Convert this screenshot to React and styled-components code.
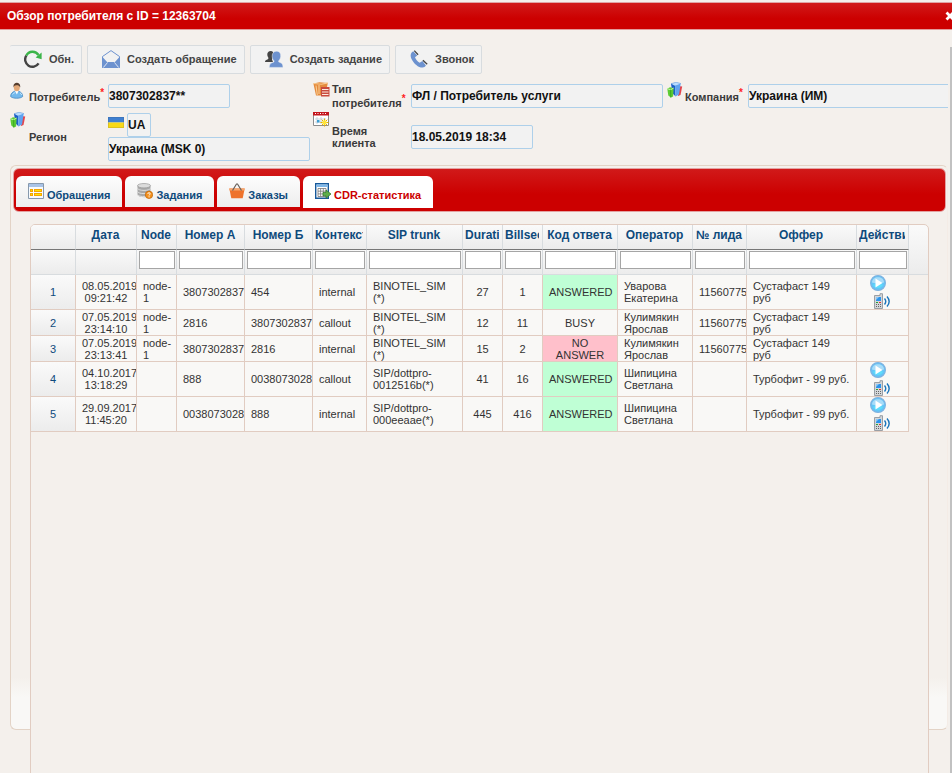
import React from "react";
import styled, { createGlobalStyle, css } from "styled-components";

const Global = createGlobalStyle`
  * { box-sizing: border-box; }
  body { margin: 0; background: #f4f0ec; font-family: "Liberation Sans", Arial, sans-serif; color: #222; overflow: hidden; }
  button, input { font-family: inherit; }
`;

const Dialog = styled.div`
  display: flex;
  flex-direction: column;
  height: 100vh;
  overflow: hidden;
`;
const TitleBar = styled.header`
  display: flex;
  align-items: center;
  justify-content: space-between;
  flex: none;
  height: 28px;
  margin-top: 2px;
  padding-left: 7px;
  overflow: hidden;
  border-top: 1px solid #e0a5a5;
  border-bottom: 1px solid #e39b9b;
  background: linear-gradient(#d11a1a, #c00 60%);
`;
const Title = styled.h1`
  margin: 0;
  font-size: 12px;
  line-height: 16px;
  color: #fff;
`;
const CloseButton = styled.button`
  display: flex;
  flex: none;
  width: 7px;
  height: 16px;
  padding: 0;
  border: 0;
  align-items: center;
  overflow: hidden;
  background: none;
  cursor: pointer;
  svg { flex: none; }
`;
const Body = styled.div`
  display: flex;
  flex: 1;
  min-height: 0;
`;
const Content = styled.main`
  display: flex;
  flex: 1;
  min-width: 0;
  flex-direction: column;
  padding: 15px 2px 43px 10px;
`;
const ScrollThumb = styled.div`
  flex: none;
  width: 2px;
  margin-top: 17px;
  background: #c1c1c1;
`;

const Toolbar = styled.div`
  display: flex;
  flex: none;
  gap: 5px;
  height: 29px;
`;
const ToolButton = styled.button`
  display: flex;
  align-items: center;
  gap: 7px;
  padding: 0 7px 2px 14px;
  border: 1px solid #d8dcdf;
  border-radius: 2px;
  background: #f2f2f2;
  color: #444;
  font-size: 11px;
  font-weight: bold;
  white-space: nowrap;
  cursor: pointer;
  &:first-child { border-left: 0; }
  svg { flex: none; }
`;

const Form = styled.form`
  display: grid;
  flex: none;
  grid-template-columns: 19px 79px 205px 19px 79px 256px 18px 63px minmax(0, 1fr);
  grid-template-rows: 30px 52px;
  align-items: center;
  margin-top: 7px;
  overflow: hidden;
`;
const FieldIcon = styled.span`
  display: flex;
  align-self: start;
  padding-top: 1px;
`;
const Label = styled.label`
  font-size: 11px;
  line-height: 12px;
  font-weight: bold;
  color: #3a3a3a;
  sup { font-size: 10px; line-height: 8px; color: #f22; }
`;
const TextField = styled.input`
  width: ${(p) => p.$width};
  height: 24px;
  padding: 0;
  border: 1px solid #aed0ea;
  border-radius: 2px;
  background: #f2f2f2;
  color: #111;
  font-size: 12px;
  font-weight: bold;
`;
const Region = styled.div`
  display: flex;
  flex-direction: column;
`;
const Country = styled.div`
  display: flex;
  align-items: flex-start;
  gap: 3px;
`;
const FlagBox = styled.span`
  display: flex;
  padding-top: 4px;
`;

const Panel = styled.section`
  display: flex;
  flex: 1;
  min-height: 0;
  flex-direction: column;
  margin-top: 2px;
  padding: 2px 1px 2px 2px;
  border: 1px solid #e3d3c6;
  border-right-color: #f4ece6;
  border-radius: 6px;
  background: linear-gradient(#f4f0ec calc(100% - 52px), #f9f8f6 calc(100% - 32px));
`;
const TabBar = styled.nav`
  display: flex;
  flex: none;
  gap: 3px;
  height: 44px;
  padding: 7px 2px 0;
  border: 1px solid #e3a1a1;
  border-radius: 6px;
  background: linear-gradient(#d11a1a, #c00 60%);
`;
const Tab = styled.button`
  display: flex;
  align-items: center;
  gap: 3px;
  height: 31px;
  padding: 0 12px 2px;
  border: 0;
  border-radius: 6px 6px 0 0;
  background: linear-gradient(#fdfdfd, #ededed);
  color: #0e4a7c;
  font-size: 11px;
  font-weight: bold;
  white-space: nowrap;
  cursor: pointer;
  span { padding-top: 8px; }
  svg { flex: none; }
  ${(p) => p.$active && css`height: 32px; background: #fff; color: #c00;`}
`;

const GridBox = styled.div`
  flex: none;
  height: 600px;
  margin: 12px 17px 0;
  overflow: hidden;
  border: 1px solid #e1ccc1;
  border-radius: 5px 5px 0 0;
  background: linear-gradient(#fafafa, #ececec 49px, #d8dcdf 49px, #d8dcdf 50px, #f4f0ec 50px);
`;
const Table = styled.table`
  width: 878px;
  table-layout: fixed;
  border-collapse: separate;
  border-spacing: 0;
  font-size: 11px;
  line-height: 12px;
`;
const Column = styled.col`
  width: ${(p) => p.$width}px;
`;
const HeadCell = styled.th`
  height: 25px;
  padding: 0 3px 5px 2px;
  border-right: 1px solid #d8dcdf;
  border-bottom: 1px solid #777;
  background: linear-gradient(#fafafa, #ececec);
  color: #0e4a7c;
  font-size: 12px;
  text-align: center;
`;
const HeadText = styled.div`
  overflow: hidden;
  line-height: 14px;
  white-space: nowrap;
`;
const FilterCell = styled.td`
  height: 25px;
  padding: 0 1px 5px 2px;
  border-right: 1px solid #d8dcdf;
  border-bottom: 1px solid #d8dcdf;
  background: linear-gradient(#f9f9f9, #ececec);
`;
const FilterInput = styled.input`
  display: block;
  width: 100%;
  height: 18px;
  padding: 1px;
  border: 1px solid #a5a5a5;
  background: #fff;
`;
const statusColor = { ANSWERED: "#bfffd5", "NO ANSWER": "#ffc0cb" };
const Cell = styled.td`
  height: ${(p) => (p.$tall ? 35 : 26)}px;
  padding: 0 6px;
  overflow: hidden;
  border-right: 1px solid #e1ccc1;
  border-bottom: 1px solid #e1ccc1;
  background: ${(p) => statusColor[p.$status] || "#f9f8f6"};
  color: #333;
  text-align: ${(p) => (p.$center ? "center" : "left")};
`;
const NumberCell = styled(Cell)`
  background: linear-gradient(#fafafa, #ececec);
  color: #0e4a7c;
  text-align: center;
`;
const ActionCell = styled(Cell)`
  padding: 0 0 0 13px;
`;
const Actions = styled.div`
  display: flex;
  flex-direction: column;
  align-items: flex-start;
  gap: 2px;
`;
const IconButton = styled.button`
  display: flex;
  padding: 0;
  border: 0;
  background: none;
  cursor: pointer;
`;

const RefreshIcon = () => (
  <svg width="18" height="18" viewBox="0 0 18 18" fill="none">
    <path d="M2.300 5.600A7 7 0 0 1 14.500 5" stroke="#3bb54a" strokeWidth="2.400" />
    <path d="M2.300 5.600A7 7 0 0 0 14.600 13.400" stroke="#444" strokeWidth="2.400" />
    <path d="M17.600 2.600v6.600l-6-1.800z" fill="#3bb54a" />
  </svg>
);
const EnvelopeIcon = () => (
  <svg width="18" height="18" viewBox="0 0 18 18">
    <path d="M.5 6.500 9 .6l8.500 5.900V17.500H.5z" fill="#f2f2f2" stroke="#6d92cf" />
    <path d="m.5 7 5 5.500-5 5zM17.500 7l-5 5.500 5 5z" fill="#6d92cf" />
    <path d="M5.500 12h7L18 18H0z" fill="#6d92cf" />
    <path d="m5.500 12.500-4 5M12.500 12.500l4 5" fill="none" stroke="#eef3fa" strokeWidth=".8" />
  </svg>
);
const PeopleIcon = () => (
  <svg width="18" height="18" viewBox="0 0 18 18">
    <path d="M5.500 1C8 1 9 3 8.500 5.500L7 9.500l1 2.500H0c0-1.800 1-2 3.300-3V7.500C1.500 5 2.200 1 5.500 1z" fill="#444" />
    <path d="M11.500 1.200c3 0 4.600 2.200 4.200 5.300-.2 2-1 3.400-2 4.300v1.200c2.600 1 4.300 1.500 4.300 5.400H4.300c0-3.900 2-4.400 4.700-5.400v-1.200C6.200 8.200 6.300 1.200 11.500 1.200z" fill="#6d92cf" stroke="#f2f2f2" strokeWidth=".5" />
  </svg>
);
const PhoneIcon = () => (
  <svg width="18" height="18" viewBox="0 0 18 18">
    <path d="M3.200 1.200C.3 2.800 0 6 1.800 9.400c2.200 4.200 6.500 8.200 10.800 8.100 1.400 0 2.600-.7 3.300-2L12.400 11l-2.700 1.700C7.500 11.500 6 9.500 5 7.200l2.200-1.700z" fill="#6d92cf" />
    <path d="m4.300.6 3.800 4.100M12.900 10.200l4.300 4" stroke="#444" strokeWidth="1.300" />
  </svg>
);
const UserIcon = () => (
  <svg width="14" height="17" viewBox="0 0 14 17">
    <path d="M.6 14.500C.7 11 3 10 4.300 9.200h4.500c2 .9 3.800 2 3.900 5.300-2 2.300-10 2.400-12.100 0z" fill="#72b8ec" stroke="#3d83bd" strokeWidth=".7" />
    <path d="M2.500 12.500c1-1.500 2-1.500 2.500-2M10 11c1 .5 1.500 1.200 1.700 2" stroke="#c5e6fb" fill="none" />
    <path d="M4.700 8.500h4l-1.800 4z" fill="#fff" />
    <ellipse cx="6.800" cy="5.200" rx="3" ry="4" fill="#e2a878" />
    <path d="M3.500 5.300C2.500-.6 11-.8 10.200 5.300 9.300 3.500 8 3 6.500 3.200 5 3 4 3.700 3.500 5.300z" fill="#543d2e" />
  </svg>
);
const CubesIcon = () => (
  <svg width="16" height="16" viewBox="0 0 16 16">
    <path d="m11 4 4.200.5-1.700 8.500-2.500 1z" fill="#e3434b" />
    <path d="m4 1.800 5-1.600 4.700 1.300-2 1.800-4.700.5z" fill="#b9dcff" stroke="#4b8ad8" strokeWidth=".5" />
    <path d="m4 1.800 4 2.200.6 10.500-3-3z" fill="#1b5fc7" />
    <path d="m8 4 5.700-2.500-1.700 11L8.600 14.500z" fill="#5fa3f0" />
    <path d="M.3 6.700 3 5.300l3.600.8-.5 8.500-2.300 1-2.500-2.200z" fill="#5ccb34" />
    <path d="m.3 6.700 3.300 1 3-1.600" fill="none" stroke="#c8f6a9" />
    <path d="m3.600 7.700.2 7.900" stroke="#2e981b" strokeWidth=".7" />
  </svg>
);
const TypeIcon = () => (
  <svg width="17" height="15" viewBox="0 0 17 15">
    <path d="m.4 1.500 6-1.200 8.400.6-.8 4H8v8.500H3z" fill="#e48a3c" />
    <path d="m.4 1.500 8 .8 6.400-1.400M3 3.500 4.300 13M6 3v9" fill="none" stroke="#f9cd93" strokeWidth="1.100" />
    <rect x="8" y="5" width="8.500" height="9.500" fill="#c94a3d" />
    <path d="M9 7.500h6.500M9 10h6.500M9 12.500h6.500" stroke="#fbe9e0" />
  </svg>
);
const CalendarIcon = () => (
  <svg width="16" height="15" viewBox="0 0 16 15">
    <path d="M.5.5h15v13H.5z" fill="#fff" stroke="#8c8c8c" />
    <path d="M0 0h16v3.500H0z" fill="#c4161c" />
    <path d="M2 1.500h12" stroke="#fff" strokeDasharray="1 1.500" />
    <path d="M4 5v7M8 5v7M2 7h11M2 10h9" stroke="#bdc9d4" strokeWidth=".8" />
    <path d="M4 8h2.500v2.500H4z" fill="#3a9fd4" />
    <path d="M11.500 6.500v8M7.500 10.500h8M8.700 7.700l5.600 5.600M14.300 7.700l-5.600 5.600" stroke="#e5ad00" />
    <circle cx="11.500" cy="10.500" r="2.200" fill="#ffe536" />
  </svg>
);
const FlagIcon = () => (
  <svg width="16" height="11" viewBox="0 0 16 11">
    <path d="M0 0h16v5.500H0z" fill="#3f7fd0" />
    <path d="M0 5.500h16V11H0z" fill="#f8d917" />
    <path d="M.5.500h15v10H.5z" fill="none" stroke="#345" strokeOpacity=".15" />
  </svg>
);
const ListIcon = () => (
  <svg width="16" height="16" viewBox="0 0 16 16">
    <path d="M.5.500h15v15H.5z" fill="#f7fafd" stroke="#8799ad" />
    <path d="M1 1h14v3H1z" fill="#a9c3e6" />
    <path d="M2 6h3v3H2zM2 10h3v3H2zM6 6h8v3H6zM6 10h8v3H6z" fill="#f5a400" />
    <path d="M3 7h1v1H3zM3 11h1v1H3zM7 7h6v1H7zM7 11h6v1H7z" fill="#ffe600" />
  </svg>
);
const DatabaseIcon = () => (
  <svg width="16" height="16" viewBox="0 0 16 16">
    <path d="M.5 2.500v9c0 3.500 13 3.500 13 0v-9z" fill="#a8a8a8" />
    <path d="M.5 5.300c1 2.800 12 2.800 13 0M.5 8.500c1 2.800 12 2.800 13 0M.5 11.500c1 2.500 9 2.500 10 1.500" stroke="#ddd" fill="none" />
    <ellipse cx="7" cy="2.700" rx="6.500" ry="2.200" fill="#dcdcdc" stroke="#999" strokeWidth=".7" />
    <circle cx="12" cy="11.800" r="3.700" fill="#f4911e" stroke="#bb6206" strokeWidth=".7" />
    <path d="M10.800 10.800c.1-1.500 2.600-1.300 2.400.1 0 .7-1.100.8-1.100 1.600M12.100 13.300v1" stroke="#fff" fill="none" />
  </svg>
);
const BasketIcon = () => (
  <svg width="16" height="16" viewBox="0 0 16 16">
    <path d="M.3 5.500h15.400l-2 9.800H2.300z" fill="#ee722c" />
    <path d="M.3 5.500h15.400l-.4 2H.7z" fill="#f8a66c" />
    <path d="m3.500 7.500 4-6.500h1l4 6.500" fill="none" stroke="#68605b" strokeWidth="1.200" />
  </svg>
);
const ReportIcon = () => (
  <svg width="16" height="17" viewBox="0 0 16 17">
    <path d="M.7.700h12.600v14.600H.7z" fill="#fff" stroke="#17599a" strokeWidth="1.400" />
    <path d="M1.500 1.500h11v2.500h-11z" fill="#7eb7e9" />
    <path d="M3 5.500h8v8H3zM5.600 5.500v8M8.300 5.500v8M3 8.200h8M3 10.900h8" fill="none" stroke="#777" strokeWidth=".8" />
    <path d="M8 9.500h3V7l5 4-5 4.300v-2.500H8z" fill="#5fae4a" stroke="#2d7628" strokeWidth=".7" />
  </svg>
);
const PlayIcon = () => (
  <svg width="16" height="16" viewBox="0 0 16 16">
    <circle cx="8" cy="8" r="7.400" fill="#62c6f7" stroke="#7fb2e0" strokeWidth="1.200" />
    <path d="M3 10c2 4 8 4 10 0-3-2-7-2-10 0z" fill="#5fdcfb" />
    <path d="M2 7.500C2 .5 14 .5 14 7.500 10 9 6 9 2 7.500z" fill="#a9dcf8" />
    <path d="M5.500 3.500v9l7-4.500z" fill="#fff" />
  </svg>
);
const HandsetIcon = () => (
  <svg width="21" height="16" viewBox="0 0 21 16">
    <path d="M4.500 2.500h5.500V.7h2.500v14.800h-8z" fill="#d3d6d9" stroke="#9a9fa5" />
    <path d="M6 4h5v4H6z" fill="#2c93ea" />
    <path d="M6 4h3L6 7z" fill="#8cc8f6" />
    <path d="M6 9.500h2" stroke="#2ba33a" />
    <path d="M9 9.500h2" stroke="#d33" />
    <path d="M6 11.500h5M6 13.500h5" stroke="#666" strokeDasharray="1 1" />
    <path d="M14.500 5.500c1.500 1.800 1.500 4.200 0 6M17 3.500c2.600 3 2.600 7 0 10" fill="none" stroke="#1b75bb" strokeWidth="1.400" />
  </svg>
);

const columns = [
  ["", 45], ["Дата", 61], ["Node", 40], ["Номер А", 68], ["Номер Б", 68], ["Контекст", 54],
  ["SIP trunk", 96], ["Duration", 40], ["Billsec", 40], ["Код ответа", 75], ["Оператор", 75],
  ["№ лида", 54], ["Оффер", 110], ["Действия", 52],
];
const calls = [
  { date: "08.05.2019 09:21:42", node: "node-1", a: "3807302837", b: "454", context: "internal", trunk: "BINOTEL_SIM (*)", duration: 27, bill: 1, status: "ANSWERED", operator: "Уварова Екатерина", lead: "11560775", offer: "Сустафаст 149 руб", record: true },
  { date: "07.05.2019 23:14:10", node: "node-1", a: "2816", b: "3807302837", context: "callout", trunk: "BINOTEL_SIM (*)", duration: 12, bill: 11, status: "BUSY", operator: "Кулимякин Ярослав", lead: "11560775", offer: "Сустафаст 149 руб" },
  { date: "07.05.2019 23:13:41", node: "node-1", a: "3807302837", b: "2816", context: "internal", trunk: "BINOTEL_SIM (*)", duration: 15, bill: 2, status: "NO ANSWER", operator: "Кулимякин Ярослав", lead: "11560775", offer: "Сустафаст 149 руб" },
  { date: "04.10.2017 13:18:29", node: "", a: "888", b: "0038073028", context: "callout", trunk: "SIP/dottpro-0012516b(*)", duration: 41, bill: 16, status: "ANSWERED", operator: "Шипицина Светлана", lead: "", offer: "Турбофит - 99 руб.", record: true },
  { date: "29.09.2017 11:45:20", node: "", a: "0038073028", b: "888", context: "internal", trunk: "SIP/dottpro-000eeaae(*)", duration: 445, bill: 416, status: "ANSWERED", operator: "Шипицина Светлана", lead: "", offer: "Турбофит - 99 руб.", record: true },
];
const tools = [
  ["Обн.", RefreshIcon], ["Создать обращение", EnvelopeIcon], ["Создать задание", PeopleIcon], ["Звонок", PhoneIcon],
];
const tabs = [
  ["Обращения", ListIcon], ["Задания", DatabaseIcon], ["Заказы", BasketIcon], ["CDR-статистика", ReportIcon],
];

function CallRow({ call, index }) {
  const tall = call.record;
  return (
    <tr>
      <NumberCell $tall={tall}>{index + 1}</NumberCell>
      <Cell $tall={tall} $center>{call.date}</Cell>
      <Cell>{call.node}</Cell>
      <Cell>{call.a}</Cell>
      <Cell>{call.b}</Cell>
      <Cell>{call.context}</Cell>
      <Cell>{call.trunk}</Cell>
      <Cell $center>{call.duration}</Cell>
      <Cell $center>{call.bill}</Cell>
      <Cell $center $status={call.status}>{call.status}</Cell>
      <Cell>{call.operator}</Cell>
      <Cell>{call.lead}</Cell>
      <Cell>{call.offer}</Cell>
      <ActionCell>
        {call.record && (
          <Actions>
            <IconButton type="button" aria-label="Прослушать"><PlayIcon /></IconButton>
            <IconButton type="button" aria-label="Позвонить"><HandsetIcon /></IconButton>
          </Actions>
        )}
      </ActionCell>
    </tr>
  );
}

export default function App() {
  return (
    <Dialog role="dialog" aria-labelledby="dialog-title">
      <Global />
      <TitleBar>
        <Title id="dialog-title">Обзор потребителя с ID = 12363704</Title>
        <CloseButton type="button" aria-label="Закрыть">
          <svg width="10" height="10" viewBox="0 0 10 10"><path d="m1.500 1.500 7 7M8.500 1.500l-7 7" stroke="#fff" strokeWidth="2.800" /></svg>
        </CloseButton>
      </TitleBar>
      <Body>
        <Content>
          <Toolbar>
            {tools.map(([text, Icon]) => (
              <ToolButton type="button" key={text}><Icon />{text}</ToolButton>
            ))}
          </Toolbar>
          <Form>
            <FieldIcon><UserIcon /></FieldIcon>
            <Label htmlFor="consumer">Потребитель<sup>*</sup></Label>
            <TextField id="consumer" $width="122px" readOnly defaultValue="3807302837**" />
            <FieldIcon><TypeIcon /></FieldIcon>
            <Label htmlFor="type">Тип потребителя<sup>*</sup></Label>
            <TextField id="type" $width="252px" readOnly defaultValue="ФЛ / Потребитель услуги" />
            <FieldIcon><CubesIcon /></FieldIcon>
            <Label htmlFor="company">Компания<sup>*</sup></Label>
            <TextField id="company" $width="calc(100% + 4px)" readOnly defaultValue="Украина (ИМ)" />
            <FieldIcon><CubesIcon /></FieldIcon>
            <Label htmlFor="region">Регион</Label>
            <Region>
              <Country>
                <FlagBox><FlagIcon /></FlagBox>
                <TextField aria-label="Код страны" $width="24px" readOnly defaultValue="UA" />
              </Country>
              <TextField id="region" $width="202px" readOnly defaultValue="Украина (MSK 0)" />
            </Region>
            <FieldIcon><CalendarIcon /></FieldIcon>
            <Label htmlFor="time">Время<br />клиента</Label>
            <TextField id="time" $width="122px" readOnly defaultValue="18.05.2019 18:34" />
          </Form>
          <Panel>
            <TabBar>
              {tabs.map(([text, Icon], i) => (
                <Tab type="button" key={text} $active={i === 3}><Icon /><span>{text}</span></Tab>
              ))}
            </TabBar>
            <GridBox>
              <Table>
                <colgroup>{columns.map(([name, width]) => <Column key={name} $width={width} />)}</colgroup>
                <thead>
                  <tr>{columns.map(([name]) => <HeadCell key={name} scope="col"><HeadText>{name}</HeadText></HeadCell>)}</tr>
                  <tr>
                    {columns.map(([name], i) => (
                      <FilterCell key={name}>{i > 1 && <FilterInput aria-label={name} />}</FilterCell>
                    ))}
                  </tr>
                </thead>
                <tbody>{calls.map((call, i) => <CallRow key={call.date} call={call} index={i} />)}</tbody>
              </Table>
            </GridBox>
          </Panel>
        </Content>
        <ScrollThumb />
      </Body>
    </Dialog>
  );
}
